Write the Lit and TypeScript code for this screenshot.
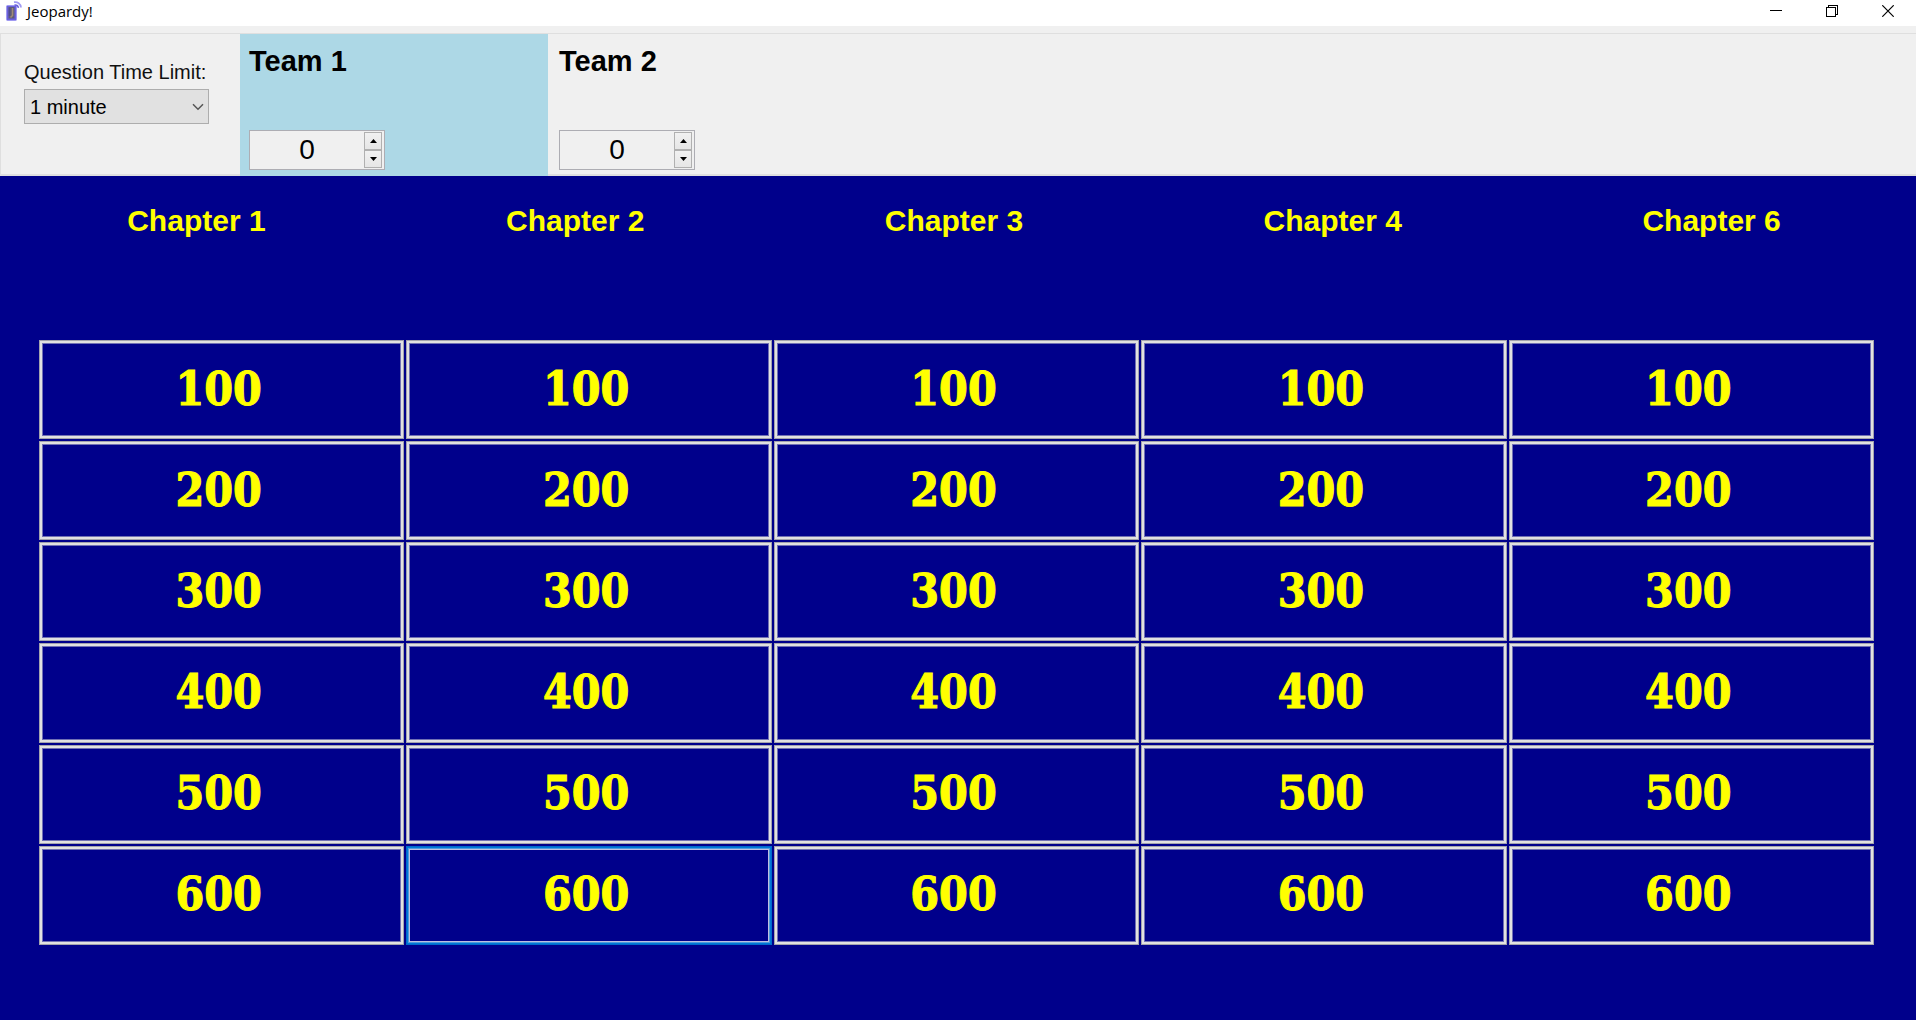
import { LitElement, html, css } from "lit";
import { customElement, property, state } from "lit/decorators.js";
import { classMap } from "lit/directives/class-map.js";

const CHAPTERS = ["Chapter 1", "Chapter 2", "Chapter 3", "Chapter 4", "Chapter 6"];
const POINTS = [100, 200, 300, 400, 500, 600];
const TIME_LIMITS = ["30 seconds", "1 minute", "2 minutes", "5 minutes"];

@customElement("title-bar")
class TitleBar extends LitElement {
  static styles = css`
    :host {
      display: flex;
      align-items: stretch;
      height: 26px;
      background: #fff;
      color: #000;
    }
    .brand {
      display: flex;
      align-items: flex-start;
      flex: 1;
      gap: 4px;
      padding-left: 5px;
    }
    .title {
      margin: 0;
      font: 400 15px/22px "Open Sans", "Noto Sans", sans-serif;
    }
    .logo {
      display: block;
    }
    .caption {
      display: flex;
      justify-content: center;
      width: 56px;
      padding: 5px 0 0;
      border: 0;
      background: none;
    }
  `;

  render() {
    return html`
      <div class="brand">
        <svg class="logo" width="18" height="22" viewBox="0 0 18 22" aria-hidden="true">
          <rect x="1.5" y="5.5" width="10" height="15" rx="1" fill="#6a60dc" stroke="#a09af2" />
          <rect x="3.5" y="7" width="6" height="11.5" fill="#5d5a78" />
          <path d="M7.5 8v7.5l-2 2" fill="none" stroke="#a08c78" stroke-width="1.6" />
          <path d="M4.3 8v8" stroke="#4a4496" stroke-width="1" />
          <path d="M9 2.2c3.6-.6 6.6 1.6 7 5.3" fill="none" stroke="#a09af2" stroke-width="1.7" />
          <path d="M9.5 5c2-.2 3.6.9 4 2.8" fill="none" stroke="#6a60dc" stroke-width="1.5" />
        </svg>
        <h1 class="title">Jeopardy!</h1>
      </div>
      <button class="caption" aria-label="Minimize">
        <svg width="12" height="12" viewBox="0 0 12 12" shape-rendering="crispEdges">
          <path d="M0 5.5h12" stroke="#000" />
        </svg>
      </button>
      <button class="caption" aria-label="Restore">
        <svg width="12" height="12" viewBox="0 0 12 12" fill="none" stroke="#000" shape-rendering="crispEdges">
          <path d="M.5 2.5h9v9h-9z" />
          <path d="M2.5 2.5v-2h9v9h-2" />
        </svg>
      </button>
      <button class="caption" aria-label="Close">
        <svg width="12" height="12" viewBox="0 0 12 12" stroke="#000" stroke-width="1.2">
          <path d="M.3.3l11.4 11.4M11.7.3L.3 11.7" />
        </svg>
      </button>
    `;
  }
}

@customElement("team-panel")
class TeamPanel extends LitElement {
  @property() name = "";
  @property({ type: Number }) score = 0;

  static styles = css`
    :host {
      display: flex;
      flex-direction: column;
      justify-content: space-between;
      align-items: flex-start;
      box-sizing: border-box;
      width: 308px;
      padding: 10px 9px 4px;
      font-family: "Liberation Sans", Arial, sans-serif;
      color: #000;
    }
    .name {
      font-size: 29px;
      font-weight: 700;
      line-height: 34px;
    }
    .spinner {
      display: flex;
      box-sizing: border-box;
      width: 136px;
      height: 40px;
      padding: 1px 2px 1px 0;
      border: 1px solid #adadb3;
      background: #f0f0f0;
    }
    .value {
      flex: 1;
      min-width: 0;
      padding: 0;
      border: 0;
      outline: 0;
      background: none;
      color: #000;
      font: 400 28px/36px "Liberation Sans", Arial, sans-serif;
      text-align: center;
      appearance: textfield;
      -moz-appearance: textfield;
    }
    .value::-webkit-inner-spin-button,
    .value::-webkit-outer-spin-button {
      margin: 0;
      -webkit-appearance: none;
    }
    .steps {
      display: flex;
      flex-direction: column;
      width: 18px;
    }
    .step {
      display: flex;
      flex: 1;
      align-items: center;
      justify-content: center;
      padding: 0;
      border: 1px solid #b0b0b0;
      background: linear-gradient(#f1f1f1, #e6e6e6);
    }
  `;

  private change(by: number) {
    this.score += by;
  }

  render() {
    return html`
      <label class="name" for="score">${this.name}</label>
      <div class="spinner">
        <input
          class="value"
          id="score"
          type="number"
          .value=${String(this.score)}
          @change=${(e: Event) => (this.score = Number((e.target as HTMLInputElement).value))}
        />
        <div class="steps">
          <button class="step" aria-label="Increase score" @click=${() => this.change(100)}>
            <svg width="7" height="4" viewBox="0 0 7 4"><path d="M0 4L3.5 0 7 4z" /></svg>
          </button>
          <button class="step" aria-label="Decrease score" @click=${() => this.change(-100)}>
            <svg width="7" height="4" viewBox="0 0 7 4"><path d="M0 0L3.5 4 7 0z" /></svg>
          </button>
        </div>
      </div>
    `;
  }
}

@customElement("game-board")
class GameBoard extends LitElement {
  @state() private selected = "1-600";

  static styles = css`
    :host {
      display: flex;
      flex-direction: column;
      box-sizing: border-box;
      padding-bottom: 75px;
      background: #00008b;
      color: #ff0;
    }
    .chapters {
      display: grid;
      grid-template-columns: repeat(5, 1fr);
      min-height: 164px;
      box-sizing: border-box;
      padding: 27px 15px 0 7px;
    }
    .chapter {
      margin: 0;
      font: 700 30px/36px "Liberation Sans", Arial, sans-serif;
      text-align: center;
    }
    .clues {
      display: grid;
      flex: 1;
      grid-template-columns: repeat(5, 1fr);
      grid-auto-rows: 1fr;
      gap: 2px;
      padding: 0 42px 0 39px;
    }
    .clue {
      min-height: 64px;
      padding: 0 6px 2px 0;
      border: 1px solid #a3a3ad;
      outline: 0;
      background: #00008b;
      box-shadow: inset 0 0 0 2px #e1e1e1, inset 0 0 0 3px #7070b4;
      color: #ff0;
      font: 700 46px/48px "DejaVu Serif Condensed", "DejaVu Serif", serif;
      -webkit-text-stroke: 1px #ff0;
    }
    .clue.selected {
      border-color: #0068cc;
      box-shadow: inset 0 0 0 1px #0078d7, inset 0 0 0 2px #4f9bdc,
        inset 0 0 0 3px #c0c0e0;
    }
  `;

  render() {
    return html`
      <div class="chapters">
        ${CHAPTERS.map((name) => html`<h2 class="chapter">${name}</h2>`)}
      </div>
      <div class="clues">
        ${POINTS.map((points) =>
          CHAPTERS.map((name, column) => {
            const key = `${column}-${points}`;
            return html`<button
              class=${classMap({ clue: true, selected: key === this.selected })}
              aria-label="${name}, ${points}"
              @click=${() => (this.selected = key)}
            >${points}</button>`;
          })
        )}
      </div>
    `;
  }
}

@customElement("app-root")
class AppRoot extends LitElement {
  @state() private activeTeam = "Team 1";

  static styles = css`
    :host {
      display: flex;
      flex-direction: column;
      min-height: 100vh;
      background: #f0f0f0;
    }
    .toolbar {
      display: flex;
      min-height: 143px;
      box-sizing: border-box;
      margin-top: 7px;
      border: 1px solid #dfdfdf;
      border-width: 1px 0 2px 1px;
    }
    .settings {
      display: flex;
      flex-direction: column;
      box-sizing: border-box;
      width: 239px;
      padding: 26px 0 0 23px;
      font: 400 20px/24px "Liberation Sans", Arial, sans-serif;
      color: #111;
    }
    .picker {
      position: relative;
      width: 185px;
      margin-top: 5px;
    }
    .limit {
      box-sizing: border-box;
      width: 100%;
      height: 35px;
      padding: 0 28px 0 5px;
      border: 1px solid #adadad;
      border-radius: 0;
      background: #e1e1e1;
      color: #000;
      font: inherit;
      appearance: none;
    }
    .chevron {
      position: absolute;
      top: 14px;
      right: 5px;
      pointer-events: none;
    }
    .team {
      margin-right: 2px;
    }
    .active {
      background: #add8e6;
      margin-bottom: -2px;
      padding-bottom: 6px;
    }
    .board {
      flex: 1;
    }
  `;

  render() {
    return html`
      <title-bar></title-bar>
      <div class="toolbar">
        <div class="settings">
          <label for="limit">Question Time Limit:</label>
          <div class="picker">
            <select class="limit" id="limit">
              ${TIME_LIMITS.map(
                (limit) => html`<option ?selected=${limit === "1 minute"}>${limit}</option>`
              )}
            </select>
            <svg class="chevron" width="12" height="8" viewBox="0 0 12 8" fill="none" stroke="#555" stroke-width="1.5">
              <path d="M1 1.2l5 5 5-5" />
            </svg>
          </div>
        </div>
        ${["Team 1", "Team 2"].map(
          (name) => html`<team-panel
            class=${classMap({ team: true, active: name === this.activeTeam })}
            .name=${name}
            @click=${() => (this.activeTeam = name)}
          ></team-panel>`
        )}
      </div>
      <game-board class="board"></game-board>
    `;
  }
}
